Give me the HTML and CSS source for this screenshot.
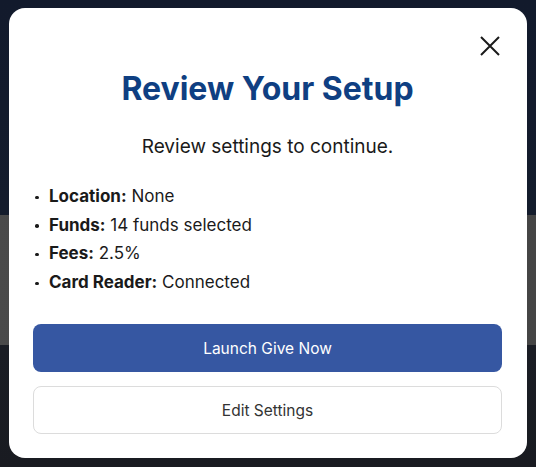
FILE: index.html
```html
<!DOCTYPE html>
<html lang="en">
<head>
<meta charset="utf-8">
<title>Review Your Setup</title>
<link rel="stylesheet" href="styles.css">
</head>
<body>
<div class="backdrop">
  <div class="band"></div>
</div>
<div class="modal" role="dialog" aria-labelledby="title">
  <button class="close" aria-label="Close">
    <svg width="20" height="20" viewBox="0 0 20 20"><path d="M1 1L19 19M19 1L1 19" stroke="#1a1a1a" stroke-width="2" fill="none"/></svg>
  </button>
  <h1 id="title" class="title">Review Your Setup</h1>
  <p class="subtitle">Review settings to continue.</p>
  <ul class="list">
    <li><b>Location:</b> None</li>
    <li><b>Funds:</b> 14 funds selected</li>
    <li><b>Fees:</b> 2.5%</li>
    <li><b>Card Reader:</b> Connected</li>
  </ul>
  <div class="actions">
    <button class="btn primary">Launch Give Now</button>
    <button class="btn secondary">Edit Settings</button>
  </div>
</div>
</body>
</html>
```
FILE: styles.css
```css
html, body {
  margin: 0;
  padding: 0;
  height: 100%;
}
body {
  background: #131a2a;
  font-family: Inter, "Noto Sans", sans-serif;
  position: relative;
  overflow: hidden;
}
.backdrop {
  position: absolute;
  inset: 0;
  background: linear-gradient(180deg, #121a2c 0%, #141c2c 45%, #1a1d24 75%, #191b21 100%);
}
.band {
  position: absolute;
  left: 0;
  right: 0;
  top: 215px;
  height: 130px;
  background: linear-gradient(90deg, #4a4a4a 0%, #3e3e3e 50%, #454545 100%);
}
.modal {
  position: absolute;
  left: 9px;
  top: 8px;
  width: 518px;
  height: 450px;
  box-sizing: border-box;
  background: #fff;
  border-radius: 16px;
  padding: 61px 25px 24px 24px;
  display: flex;
  flex-direction: column;
}
.close {
  position: absolute;
  top: 20px;
  right: 19px;
  width: 36px;
  height: 36px;
  padding: 8px;
  border: 0;
  background: none;
  display: flex;
  align-items: center;
  justify-content: center;
  cursor: pointer;
}
.title {
  margin: 0;
  text-align: center;
  font-size: 32px;
  line-height: 40px;
  font-weight: 700;
  color: #0f3f82;
  letter-spacing: 0;
}
.subtitle {
  margin: 24px 0 0;
  text-align: center;
  font-size: 19px;
  line-height: 28px;
  color: #1a1a1a;
}
.list {
  list-style: none;
  margin: 21px 0 0;
  padding: 0 0 0 2px;
  font-size: 17px;
  line-height: 28.67px;
  color: #1a1a1a;
}
.list li {
  position: relative;
  padding-left: 14px;
}
.list li::before {
  content: "";
  position: absolute;
  left: 0;
  top: 13.5px;
  width: 3.5px;
  height: 3.5px;
  border-radius: 50%;
  background: #1a1a1a;
}
.list b {
  font-weight: 700;
}
.actions {
  margin-top: auto;
  display: flex;
  flex-direction: column;
  gap: 14px;
}
.btn {
  height: 48px;
  border-radius: 8px;
  font-family: inherit;
  font-size: 15.5px;
  cursor: pointer;
}
.primary {
  background: #3657a2;
  color: #fff;
  border: 0;
}
.secondary {
  background: #fff;
  color: #333;
  border: 1px solid #dcdcdc;
}
```
